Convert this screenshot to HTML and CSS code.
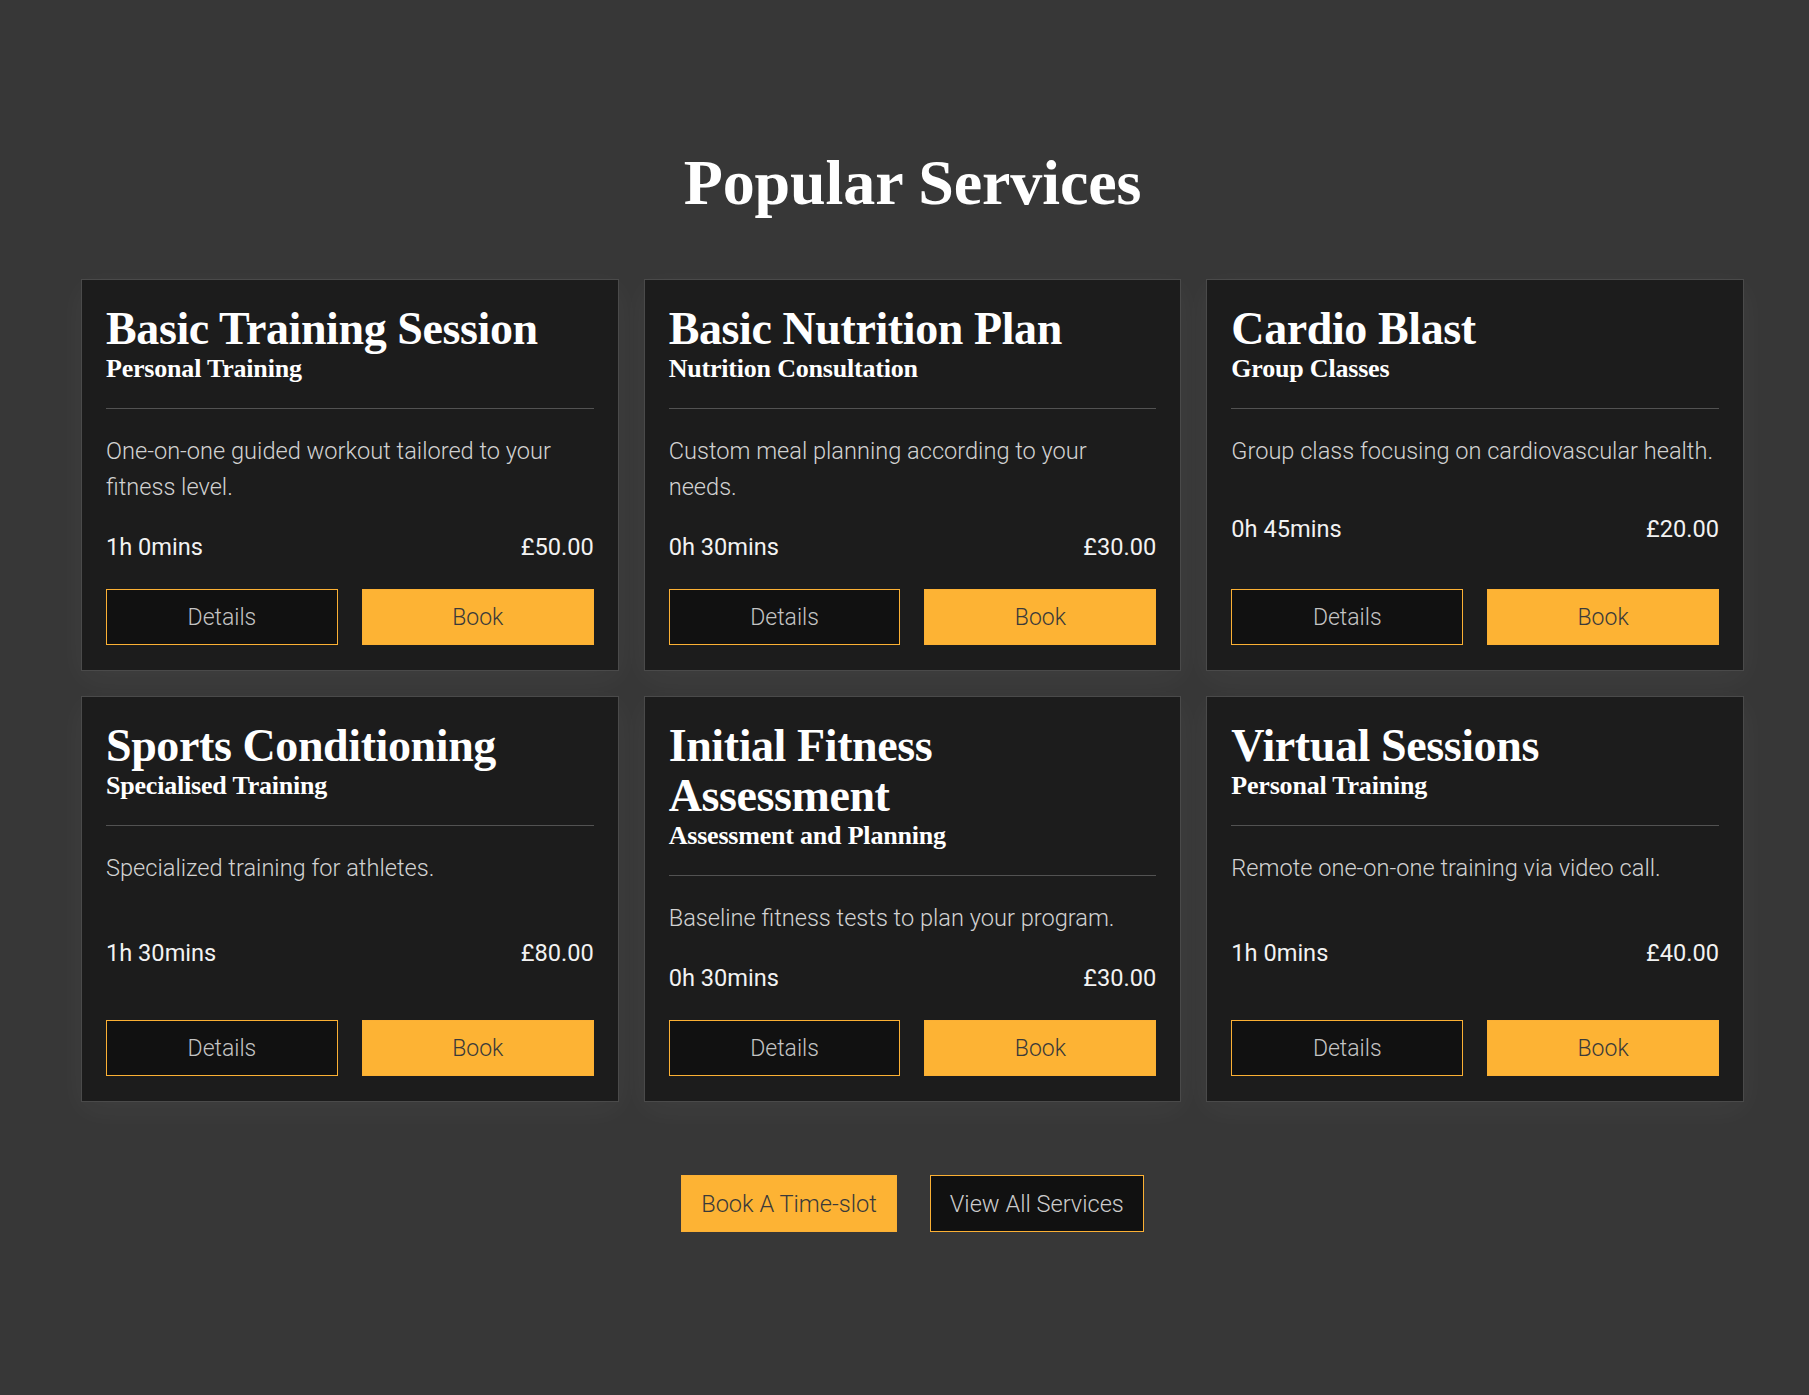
FILE: index.html
```html
<!DOCTYPE html>
<html lang="en">
<head>
<meta charset="utf-8">
<title>Popular Services</title>
<link rel="stylesheet" href="styles.css">
</head>
<body>
<section class="services">
  <h1 class="services-title">Popular Services</h1>
  <div class="grid">
    <article class="card">
      <header class="card-head">
        <h2 class="card-title">Basic Training Session</h2>
        <h3 class="card-sub">Personal Training</h3>
      </header>
      <div class="card-body">
        <p class="card-desc">One-on-one guided workout tailored to your fitness level.</p>
        <div class="card-meta"><span>1h 0mins</span><span>£50.00</span></div>
        <div class="card-actions"><a class="btn btn-outline">Details</a><a class="btn btn-solid">Book</a></div>
      </div>
    </article>
    <article class="card">
      <header class="card-head">
        <h2 class="card-title">Basic Nutrition Plan</h2>
        <h3 class="card-sub">Nutrition Consultation</h3>
      </header>
      <div class="card-body">
        <p class="card-desc">Custom meal planning according to your needs.</p>
        <div class="card-meta"><span>0h 30mins</span><span>£30.00</span></div>
        <div class="card-actions"><a class="btn btn-outline">Details</a><a class="btn btn-solid">Book</a></div>
      </div>
    </article>
    <article class="card">
      <header class="card-head">
        <h2 class="card-title">Cardio Blast</h2>
        <h3 class="card-sub">Group Classes</h3>
      </header>
      <div class="card-body">
        <p class="card-desc">Group class focusing on cardiovascular health.</p>
        <div class="card-meta"><span>0h 45mins</span><span>£20.00</span></div>
        <div class="card-actions"><a class="btn btn-outline">Details</a><a class="btn btn-solid">Book</a></div>
      </div>
    </article>
    <article class="card">
      <header class="card-head">
        <h2 class="card-title">Sports Conditioning</h2>
        <h3 class="card-sub">Specialised Training</h3>
      </header>
      <div class="card-body">
        <p class="card-desc">Specialized training for athletes.</p>
        <div class="card-meta"><span>1h 30mins</span><span>£80.00</span></div>
        <div class="card-actions"><a class="btn btn-outline">Details</a><a class="btn btn-solid">Book</a></div>
      </div>
    </article>
    <article class="card">
      <header class="card-head">
        <h2 class="card-title">Initial Fitness Assessment</h2>
        <h3 class="card-sub">Assessment and Planning</h3>
      </header>
      <div class="card-body">
        <p class="card-desc">Baseline fitness tests to plan your program.</p>
        <div class="card-meta"><span>0h 30mins</span><span>£30.00</span></div>
        <div class="card-actions"><a class="btn btn-outline">Details</a><a class="btn btn-solid">Book</a></div>
      </div>
    </article>
    <article class="card">
      <header class="card-head">
        <h2 class="card-title">Virtual Sessions</h2>
        <h3 class="card-sub">Personal Training</h3>
      </header>
      <div class="card-body">
        <p class="card-desc">Remote one-on-one training via video call.</p>
        <div class="card-meta"><span>1h 0mins</span><span>£40.00</span></div>
        <div class="card-actions"><a class="btn btn-outline">Details</a><a class="btn btn-solid">Book</a></div>
      </div>
    </article>
  </div>
  <div class="cta">
    <a class="cta-btn cta-solid">Book A Time-slot</a>
    <a class="cta-btn cta-outline">View All Services</a>
  </div>
</section>
</body>
</html>
```

FILE: styles.css
```css
* { box-sizing: border-box; }

html, body {
  margin: 0;
  padding: 0;
  background: #373737;
}

body {
  font-family: Roboto, "Liberation Sans", Arial, sans-serif;
  color: #fff;
  min-height: 1395px;
}

.services {
  padding: 151px 65px 164px 81px;
}

.services-title {
  margin: 0 0 64px;
  text-align: center;
  font-family: "Liberation Serif", "Times New Roman", serif;
  font-weight: 700;
  font-size: 64px;
  line-height: 64px;
  letter-spacing: -0.1px;
  color: #fff;
}

.grid {
  display: grid;
  grid-template-columns: repeat(3, 1fr);
  gap: 25px;
}

.card {
  display: flex;
  flex-direction: column;
  background: #1c1c1c;
  border: 1px solid #4a4a4a;
  padding: 24px 24px 25px;
  box-shadow: 0 8px 30px rgba(255, 255, 255, 0.045);
}

.card-head {
  padding-bottom: 24px;
  border-bottom: 1px solid #525252;
}

.card-title {
  margin: 0;
  font-family: "Liberation Serif", "Times New Roman", serif;
  font-weight: 700;
  font-size: 46px;
  line-height: 50px;
  letter-spacing: -0.4px;
  color: #fff;
}

.card-sub {
  margin: 0;
  font-family: "Liberation Serif", "Times New Roman", serif;
  font-weight: 700;
  font-size: 26px;
  line-height: 30px;
  letter-spacing: -0.2px;
  color: #fff;
}

.card-body {
  flex: 1;
  display: flex;
  flex-direction: column;
  justify-content: space-between;
  gap: 28px;
  padding-top: 24px;
}

.card-desc {
  margin: 0;
  font-weight: 300;
  font-size: 23.6px;
  line-height: 36px;
  color: #d2d2d2;
}

.card-meta {
  display: flex;
  justify-content: space-between;
  font-weight: 400;
  font-size: 23.6px;
  line-height: 28px;
  color: #f2f2f2;
}

.card-actions {
  display: grid;
  grid-template-columns: 1fr 1fr;
  gap: 24px;
}

.btn {
  display: flex;
  align-items: center;
  justify-content: center;
  height: 56px;
  font-weight: 300;
  font-size: 23px;
  border: 1px solid #fbb034;
  cursor: pointer;
}

.btn-outline {
  background: #111111;
  color: #c4c4c4;
}

.btn-solid {
  background: #fdb334;
  color: #3a3a3a;
}

.cta {
  display: flex;
  justify-content: center;
  gap: 33px;
  margin-top: 73px;
}

.cta-btn {
  display: inline-flex;
  align-items: center;
  height: 57px;
  padding: 0 19px;
  font-weight: 300;
  font-size: 23.6px;
  border: 1px solid #fbb034;
  cursor: pointer;
}

.cta-solid {
  background: #fdb334;
  color: #3a3a3a;
}

.cta-outline {
  background: #111111;
  color: #cccccc;
}
```
